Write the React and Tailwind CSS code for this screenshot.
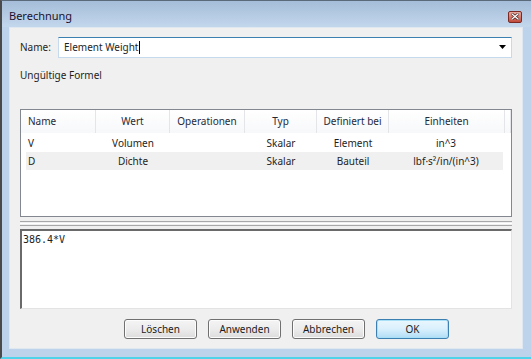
import React from 'react'

const columns = [
  { key: 'name', label: 'Name', w: 'w-[75px]', align: 'left' },
  { key: 'wert', label: 'Wert', w: 'w-[74px]' },
  { key: 'ops', label: 'Operationen', w: 'w-[75px]' },
  { key: 'typ', label: 'Typ', w: 'w-[72px]' },
  { key: 'def', label: 'Definiert bei', w: 'w-[72px]' },
  { key: 'unit', label: 'Einheiten', w: 'w-[116px]' },
]

const rows = [
  { name: 'V', wert: 'Volumen', ops: '', typ: 'Skalar', def: 'Element', unit: 'in^3' },
  { name: 'D', wert: 'Dichte', ops: '', typ: 'Skalar', def: 'Bauteil', unit: 'lbf·s²/in/(in^3)' },
]

const Button = ({ children, primary }) => (
  <button
    className={`w-[73px] h-[20px] rounded-[3px] border text-[10px] leading-none text-[#1b1b1b] ${
      primary
        ? 'border-[#3c7fb1] bg-gradient-to-b from-[#eaf6fd] via-[#d9f0fc] to-[#b0ddf6] shadow-[inset_0_0_0_1px_#a8e0f7]'
        : 'border-[#707070] bg-gradient-to-b from-[#f4f4f4] via-[#ececec] to-[#dcdcdc] shadow-[inset_0_0_0_1px_#fcfcfc]'
    }`}
  >
    {children}
  </button>
)

export default function App() {
  return (
    <div className="w-[531px] h-[359px] flex flex-col bg-[#bcd3eb] border-l-2 border-l-[#4a4a4a] border-t border-t-[#5a6a7a] border-b-2 border-b-[#4fd3ea] font-['Noto_Sans',sans-serif] text-[10px] text-[#1e1e1e]">
      {/* title bar */}
      <div className="h-[26px] shrink-0 flex items-center justify-between pl-[7px] pr-[9px] bg-gradient-to-b from-[#a5bdd9] to-[#c3d7ec]">
        <span className="text-[11px] text-[#1a1030] pt-[5px]">Berechnung</span>
        <div className="mt-[5px] w-[14px] h-[12px] rounded-[2px] border border-[#7a2a22] bg-gradient-to-b from-[#e8a99e] to-[#c0493a] flex items-center justify-center">
          <svg width="8" height="7" viewBox="0 0 8 7">
            <path d="M1 1 L7 6 M7 1 L1 6" stroke="#3a1010" strokeWidth="2.6" strokeLinecap="square" />
            <path d="M1 1 L7 6 M7 1 L1 6" stroke="#ffffff" strokeWidth="1.4" strokeLinecap="square" />
          </svg>
        </div>
      </div>

      {/* content */}
      <div className="flex-1 ml-[7px] mr-[8px] mb-[8px] bg-[#f0f0f0] border border-[#dfe7f0] flex flex-col pl-[10px] pr-[10px]">
        {/* name row */}
        <div className="mt-[9px] flex items-center h-[21px]">
          <span className="w-[38px]">Name:</span>
          <div className="flex-1 h-[21px] bg-white border border-[#c5daed] border-t-[#3c7fb1] flex items-center pl-[5px] pr-[4px]">
            <span>Element Weight</span>
            <span className="w-px h-[13px] bg-black ml-[1px]" />
            <div className="flex-1" />
            <svg width="8" height="5" viewBox="0 0 8 5">
              <path d="M0 0 H7 L3.5 4 Z" fill="#000" />
            </svg>
          </div>
        </div>

        <div className="mt-[9px] h-[16px] leading-[16px]">Ungültige Formel</div>

        {/* table */}
        <div className="mt-[26px] h-[108px] bg-white border border-[#828790] flex flex-col">
          <div className="flex h-[23px] bg-gradient-to-b from-white to-[#f7f8fa]">
            {columns.map((c) => (
              <div
                key={c.key}
                className={`${c.w} h-full flex items-center border-r border-[#e3e5e8] text-[#1e2a3a] ${
                  c.align === 'left' ? 'pl-[7px]' : 'justify-center'
                }`}
              >
                {c.label}
              </div>
            ))}
            <div className="flex-1 border-r border-[#e3e5e8]" />
          </div>
          {rows.map((r, i) => (
            <div
              key={r.name}
              className={`ml-[5px] w-[477px] h-[18px] flex items-center ${i % 2 === 1 ? 'bg-[#f0f0f0]' : ''} ${i === 0 ? 'mt-px' : ''}`}
            >
              <div className="w-[70px] pl-[2px]">{r.name}</div>
              <div className="w-[74px] text-center">{r.wert}</div>
              <div className="w-[75px] text-center">{r.ops}</div>
              <div className="w-[72px] text-center">{r.typ}</div>
              <div className="w-[72px] text-center">{r.def}</div>
              <div className="w-[114px] text-center">{r.unit}</div>
            </div>
          ))}
        </div>

        {/* splitter */}
        <div className="h-[12px] flex flex-col justify-center gap-[1px]">
          <div className="h-px bg-[#a8a8a8]" />
          <div className="h-px bg-white" />
          <div className="h-px bg-[#a8a8a8]" />
        </div>

        {/* formula box */}
        <div className="h-[80px] bg-white border-t-2 border-l-2 border-t-[#6a6a6a] border-l-[#6a6a6a] border-r border-b border-r-[#e3e3e3] border-b-[#e3e3e3] pl-px pt-[1px] leading-[14px]">
          <span className="font-['DejaVu_Sans_Mono',monospace] text-[10px] text-[#1e1e1e]">386.4*V</span>
        </div>

        {/* buttons */}
        <div className="mt-[10px] flex gap-[11px] pl-[104px]">
          <Button>Löschen</Button>
          <Button>Anwenden</Button>
          <Button>Abbrechen</Button>
          <Button primary>OK</Button>
        </div>
      </div>
    </div>
  )
}
